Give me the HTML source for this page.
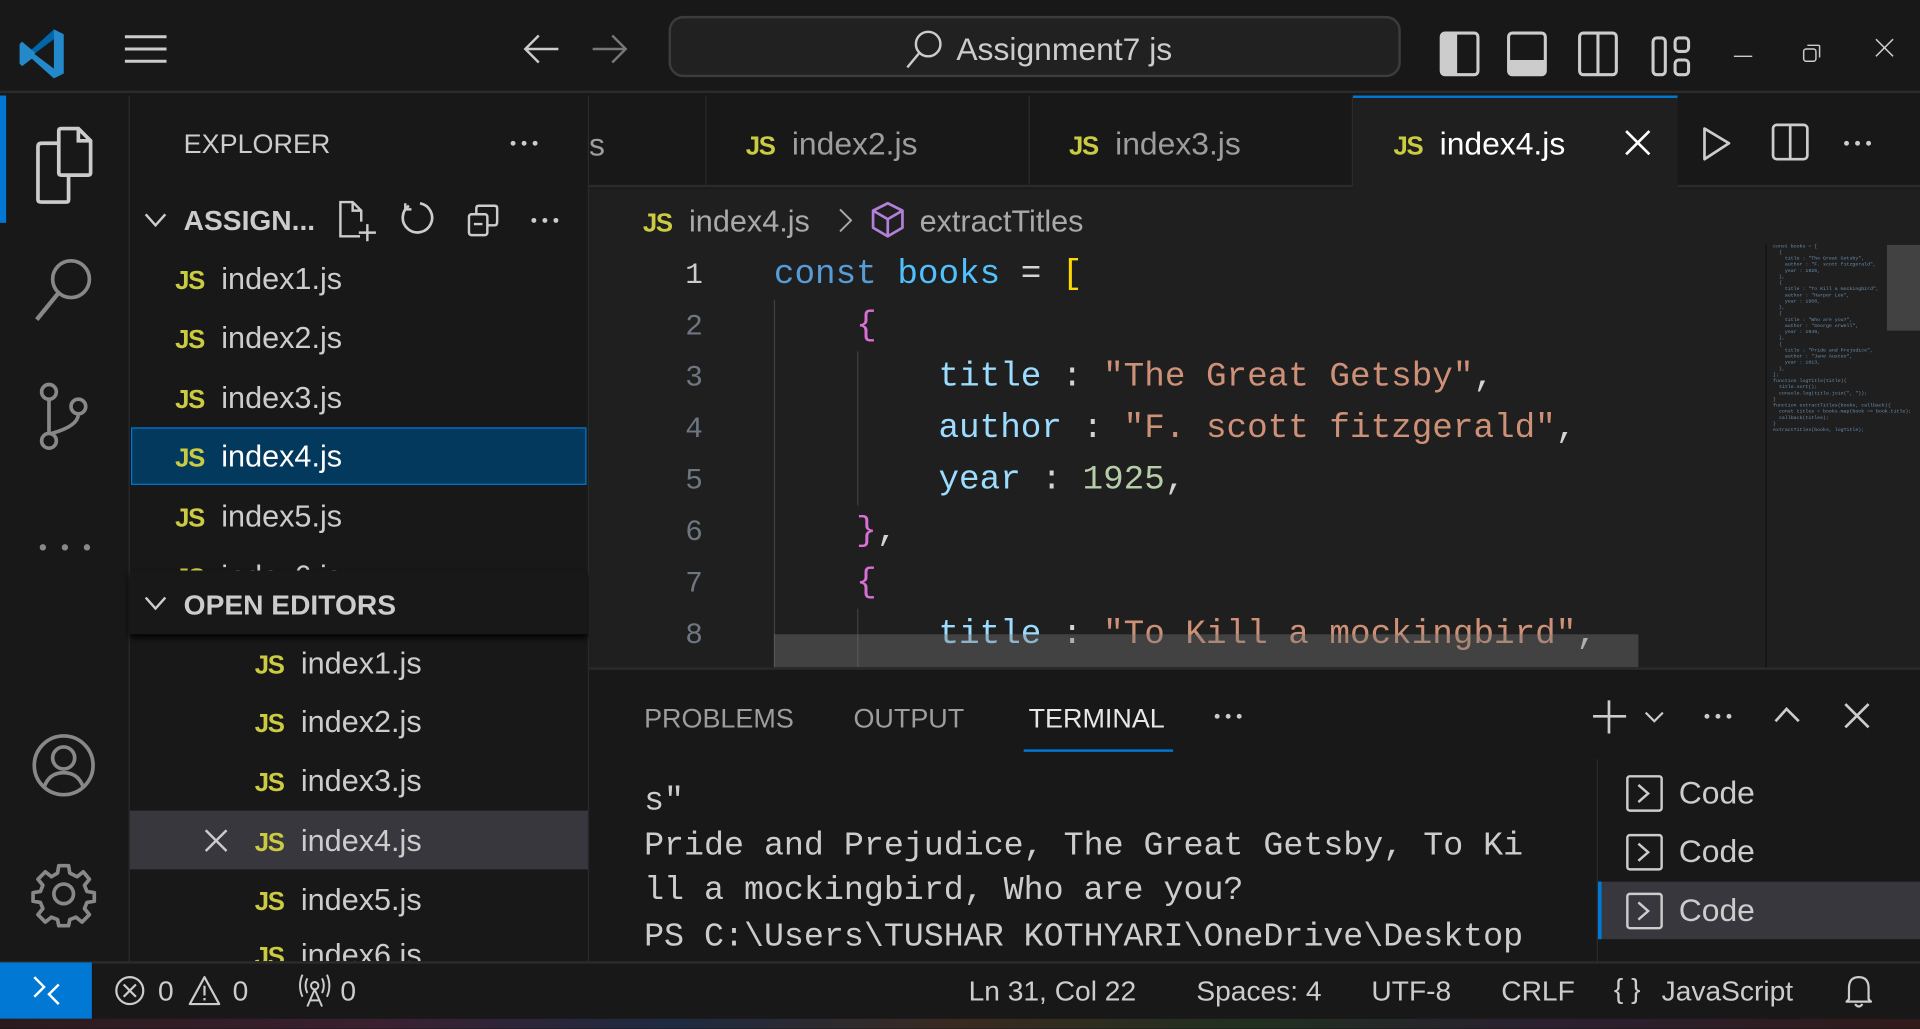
<!DOCTYPE html>
<html><head><meta charset="utf-8"><style>
*{margin:0;padding:0;box-sizing:border-box}
html,body{width:1920px;height:1029px;overflow:hidden;background:#181818}
#w{position:absolute;left:0;top:0;width:1568px;height:840px;transform:scale(1.22449);transform-origin:0 0;font-family:"Liberation Sans",sans-serif;color:#ccc;background:#181818}
.a{position:absolute}
.mono{font-family:"Liberation Mono",monospace}
.js{color:#cbcb41;font-weight:bold;font-size:21px;letter-spacing:-1px}
.f{position:absolute;font-size:25px;color:#ccc;white-space:nowrap}
.f .js{margin-right:14px}
svg{position:absolute;overflow:visible}
.ln{position:absolute;left:520px;width:54px;text-align:right;color:#6e7681;font-size:24px}
.cl{position:absolute;left:632px;font-size:28px;white-space:pre;color:#d4d4d4}
.k{color:#569cd6}.v{color:#4fc1ff}.p{color:#9cdcfe}.s{color:#ce9178}.n{color:#b5cea8}.y{color:#ffd700}.m{color:#da70d6}
.term{position:absolute;left:526px;font-size:27.2px;color:#ccc;white-space:pre}
</style></head><body><div id="w">
<!-- title bar -->
<div class="a" style="left:0;top:0;width:1568px;height:76px;background:#181818;border-bottom:2px solid #2b2b2b"></div>
<svg style="left:14px;top:22px" width="44" height="44" viewBox="0 0 44 44"><path d="M30 2 L38 6 V38 L30 42 L8 22 Z" fill="#0065a9"/><path d="M30 2 L38 6 V38 L30 42 L12 26 L4 32 L2 30 V14 L4 12 L30 34 Z" fill="#2489ca"/><path d="M30 10 V34 L14 22 Z" fill="#181818"/></svg>
<svg style="left:100px;top:27px" width="38" height="26"><path d="M2 3H36M2 13H36M2 23H36" stroke="#ccc" stroke-width="2.5"/></svg>
<svg style="left:426px;top:27px" width="32" height="26"><path d="M30 13H3M14 2L3 13L14 24" stroke="#ccc" stroke-width="2" fill="none"/></svg>
<svg style="left:482px;top:27px" width="32" height="26"><path d="M2 13H29M18 2L29 13L18 24" stroke="#777" stroke-width="2" fill="none"/></svg>
<div class="a" style="left:546px;top:13px;width:598px;height:50px;border:2px solid #3c3c3c;border-radius:12px;background:#212121"></div>
<svg style="left:738px;top:23px" width="34" height="34"><circle cx="20" cy="13" r="10" stroke="#ccc" stroke-width="2" fill="none"/><path d="M13 20L3 32" stroke="#ccc" stroke-width="2"/></svg>
<div class="a" style="left:781px;top:25px;font-size:26px;color:#ccc">Assignment7 js</div>
<svg style="left:1176px;top:26px" width="34" height="40"><rect x="1" y="1" width="30" height="34" rx="3" fill="none" stroke="#ccc" stroke-width="2.5"/><rect x="1" y="1" width="13" height="34" fill="#ccc"/></svg>
<svg style="left:1231px;top:26px" width="34" height="40"><rect x="1" y="1" width="30" height="34" rx="3" fill="none" stroke="#ccc" stroke-width="2.5"/><rect x="1" y="23" width="30" height="12" fill="#ccc"/></svg>
<svg style="left:1289px;top:26px" width="34" height="40"><rect x="1" y="1" width="30" height="34" rx="3" fill="none" stroke="#ccc" stroke-width="2.5"/><path d="M16 1V35" stroke="#ccc" stroke-width="2.5"/></svg>
<svg style="left:1349px;top:30px" width="34" height="36"><rect x="1" y="1" width="10" height="30" rx="3" fill="none" stroke="#ccc" stroke-width="2.5"/><rect x="19" y="1" width="11" height="11" rx="3" fill="none" stroke="#ccc" stroke-width="2.5"/><rect x="19" y="19" width="11" height="12" rx="3" fill="none" stroke="#ccc" stroke-width="2.5"/></svg>
<svg style="left:1416px;top:45px" width="20" height="4"><path d="M0 1H15" stroke="#ccc" stroke-width="1.2"/></svg>
<svg style="left:1472px;top:36px" width="16" height="16"><rect x="1" y="4" width="10" height="10" rx="2" fill="none" stroke="#ccc" stroke-width="1.2"/><path d="M4 1H13Q14 1 14 2V11" stroke="#ccc" stroke-width="1.2" fill="none"/></svg>
<svg style="left:1531px;top:31px" width="20" height="20"><path d="M1 1L15 15M15 1L1 15" stroke="#ccc" stroke-width="1.2"/></svg>

<!-- activity bar -->
<div class="a" style="left:0;top:78px;width:5px;height:104px;background:#0078d4"></div>
<div class="a" style="left:105px;top:78px;width:1px;height:707px;background:#2b2b2b"></div>
<svg style="left:28px;top:103px" width="50" height="60"><path d="M22 2H36L46 12V38Q46 40 44 40H22Q20 40 20 38V4Q20 2 22 2ZM36 2V12H46" stroke="#ccc" stroke-width="3" fill="none"/><path d="M20 14H6Q3 14 3 17V60Q3 62 6 62H26Q28 62 28 60V40" stroke="#ccc" stroke-width="3" fill="none"/></svg>
<svg style="left:26px;top:206px" width="54" height="60"><circle cx="32" cy="22" r="15" stroke="#888" stroke-width="3" fill="none"/><path d="M22 33L4 55" stroke="#888" stroke-width="3.5"/></svg>
<svg style="left:28px;top:310px" width="50" height="60"><circle cx="12" cy="10" r="6" stroke="#888" stroke-width="3" fill="none"/><circle cx="12" cy="50" r="6" stroke="#888" stroke-width="3" fill="none"/><circle cx="36" cy="22" r="6" stroke="#888" stroke-width="3" fill="none"/><path d="M12 16V44M36 28Q36 38 14 44" stroke="#888" stroke-width="3" fill="none"/></svg>
<svg style="left:32px;top:444px" width="44" height="8"><circle cx="3" cy="3" r="2.6" fill="#888"/><circle cx="21" cy="3" r="2.6" fill="#888"/><circle cx="39" cy="3" r="2.6" fill="#888"/></svg>
<svg style="left:26px;top:599px" width="54" height="54"><circle cx="26" cy="26" r="24" stroke="#888" stroke-width="3" fill="none"/><circle cx="26" cy="20" r="9" stroke="#888" stroke-width="3" fill="none"/><path d="M10 44Q14 32 26 32Q38 32 42 44" stroke="#888" stroke-width="3" fill="none"/></svg>
<svg style="left:26px;top:704px" width="54" height="54"><circle cx="26" cy="26" r="8" stroke="#888" stroke-width="3" fill="none"/><path d="M22 3H30L31 9L37 12L42 8L47 14L43 19L45 24L51 25V32L45 33L43 38L47 43L41 49L36 45L31 47L30 52H22L21 47L16 45L11 49L5 43L9 38L7 33L1 32V25L7 24L9 19L5 14L11 8L16 12L21 9Z" stroke="#888" stroke-width="3" fill="none" stroke-linejoin="round"/></svg>

<!-- sidebar -->
<div class="a" style="left:480px;top:78px;width:1px;height:707px;background:#2b2b2b"></div>
<div class="a" style="left:150px;top:105px;font-size:22px;color:#ccc">EXPLORER</div>
<svg style="left:416px;top:114px" width="30" height="6"><circle cx="3" cy="3" r="2" fill="#ccc"/><circle cx="12" cy="3" r="2" fill="#ccc"/><circle cx="21" cy="3" r="2" fill="#ccc"/></svg>
<svg style="left:118px;top:173px" width="20" height="14"><path d="M1 2L9 11L17 2" stroke="#ccc" stroke-width="2" fill="none"/></svg>
<div class="a" style="left:150px;top:167px;font-size:23px;font-weight:bold;color:#ccc">ASSIGN...</div>
<svg style="left:276px;top:163px" width="36" height="36"><path d="M18 30H2V2H12L19 9V18M12 2V9H19" stroke="#ccc" stroke-width="2" fill="none"/><path d="M24 20V34M17 27H31" stroke="#ccc" stroke-width="2"/></svg>
<svg style="left:327px;top:165px" width="30" height="30"><path d="M7 3A12 12 0 1 0 16 1" stroke="#ccc" stroke-width="2.2" fill="none"/><path d="M4 1V6H9" stroke="#ccc" stroke-width="2" fill="none"/></svg>
<svg style="left:382px;top:166px" width="30" height="30"><rect x="1" y="9" width="15" height="17" rx="2" stroke="#ccc" stroke-width="2" fill="none"/><path d="M7 9V4Q7 2 9 2H22Q24 2 24 4V15Q24 18 22 18H16M5 17H12" stroke="#ccc" stroke-width="2" fill="none"/></svg>
<svg style="left:433px;top:177px" width="30" height="6"><circle cx="3" cy="3" r="2" fill="#ccc"/><circle cx="12" cy="3" r="2" fill="#ccc"/><circle cx="21" cy="3" r="2" fill="#ccc"/></svg>
<div class="a" style="left:107px;top:349px;width:372px;height:47px;background:#04395e;border:1px solid #0078d4"></div>
<div class="f" style="left:143px;top:214px"><span class="js">JS</span>index1.js</div>
<div class="f" style="left:143px;top:262px"><span class="js">JS</span>index2.js</div>
<div class="f" style="left:143px;top:311px"><span class="js">JS</span>index3.js</div>
<div class="f" style="left:143px;top:359px;color:#fff"><span class="js">JS</span>index4.js</div>
<div class="f" style="left:143px;top:408px"><span class="js">JS</span>index5.js</div>
<div class="a" style="left:106px;top:455px;width:374px;height:11px;overflow:hidden"><div class="f" style="left:37px;top:2px"><span class="js">JS</span>index6.js</div></div>
<div class="a" style="left:106px;top:466px;width:374px;height:52px;background:#181818;box-shadow:0 3px 5px #000"></div>
<svg style="left:118px;top:486px" width="20" height="14"><path d="M1 2L9 11L17 2" stroke="#ccc" stroke-width="2" fill="none"/></svg>
<div class="a" style="left:150px;top:481px;font-size:23px;font-weight:bold;color:#ccc">OPEN EDITORS</div>
<div class="a" style="left:106px;top:662px;width:374px;height:48px;background:#37373d"></div>
<div class="f" style="left:208px;top:528px"><span class="js">JS</span>index1.js</div>
<div class="f" style="left:208px;top:576px"><span class="js">JS</span>index2.js</div>
<div class="f" style="left:208px;top:624px"><span class="js">JS</span>index3.js</div>
<svg style="left:167px;top:677px" width="20" height="20"><path d="M1 1L18 18M18 1L1 18" stroke="#ccc" stroke-width="2"/></svg>
<div class="f" style="left:208px;top:673px"><span class="js">JS</span>index4.js</div>
<div class="f" style="left:208px;top:721px"><span class="js">JS</span>index5.js</div>
<div class="a" style="left:106px;top:768px;width:374px;height:17px;overflow:hidden"><div class="f" style="left:102px;top:-2px"><span class="js">JS</span>index6.js</div></div>

<!-- tabs -->
<div class="a" style="left:481px;top:78px;width:1087px;height:75px;background:#181818;border-bottom:2px solid #2b2b2b"></div>
<div class="a" style="left:576px;top:78px;width:1px;height:75px;background:#2b2b2b"></div>
<div class="a" style="left:840px;top:78px;width:1px;height:75px;background:#2b2b2b"></div>
<div class="a" style="left:1104px;top:78px;width:1px;height:75px;background:#2b2b2b"></div>
<div class="a" style="left:481px;top:103px;font-size:26px;color:#9d9d9d">s</div>
<div class="f" style="left:609px;top:102px;font-size:26px;color:#9d9d9d"><span class="js">JS</span>index2.js</div>
<div class="f" style="left:873px;top:102px;font-size:26px;color:#9d9d9d"><span class="js">JS</span>index3.js</div>
<div class="a" style="left:1105px;top:78px;width:265px;height:76px;background:#1f1f1f;border-top:2px solid #0078d4"></div>
<div class="f" style="left:1138px;top:102px;font-size:26px;color:#fff"><span class="js">JS</span>index4.js</div>
<svg style="left:1327px;top:106px" width="22" height="22"><path d="M1 1L20 20M20 1L1 20" stroke="#fff" stroke-width="2.2"/></svg>
<svg style="left:1390px;top:103px" width="26" height="30"><path d="M2 2L22 14L2 27Z" stroke="#ccc" stroke-width="2.2" fill="none" stroke-linejoin="round"/></svg>
<svg style="left:1447px;top:101px" width="32" height="32"><rect x="1" y="1" width="28" height="28" rx="3" stroke="#ccc" stroke-width="2.2" fill="none"/><path d="M15 1V29" stroke="#ccc" stroke-width="2.2"/></svg>
<svg style="left:1505px;top:114px" width="30" height="6"><circle cx="3" cy="3" r="2" fill="#ccc"/><circle cx="12" cy="3" r="2" fill="#ccc"/><circle cx="21" cy="3" r="2" fill="#ccc"/></svg>

<!-- editor -->
<div class="a" style="left:481px;top:154px;width:1087px;height:391px;background:#1f1f1f"></div>
<div class="f" style="left:525px;top:167px;font-size:25px;color:#a9a9a9"><span class="js">JS</span>index4.js</div>
<svg style="left:684px;top:169px" width="14" height="22"><path d="M2 2L11 11L2 20" stroke="#a9a9a9" stroke-width="1.6" fill="none"/></svg>
<svg style="left:711px;top:164px" width="30" height="32"><path d="M14 2L26 8V22L14 29L2 22V8Z M2 8L14 15L26 8M14 15V29" stroke="#b180d7" stroke-width="2.2" fill="none" stroke-linejoin="round"/></svg>
<div class="a" style="left:751px;top:167px;font-size:25px;color:#a9a9a9">extractTitles</div>
<div class="ln mono" style="top:212px;color:#ccc">1</div>
<div class="ln mono" style="top:254px">2</div>
<div class="ln mono" style="top:296px">3</div>
<div class="ln mono" style="top:338px">4</div>
<div class="ln mono" style="top:380px">5</div>
<div class="ln mono" style="top:422px">6</div>
<div class="ln mono" style="top:464px">7</div>
<div class="ln mono" style="top:506px">8</div>
<div class="a" style="left:632px;top:245px;width:1px;height:300px;background:#404040"></div>
<div class="a" style="left:700px;top:287px;width:1px;height:126px;background:#404040"></div>
<div class="a" style="left:700px;top:497px;width:1px;height:48px;background:#404040"></div>
<div class="cl mono" style="top:209px"><span class="k">const</span> <span class="v">books</span> = <span class="y">[</span></div>
<div class="cl mono" style="top:251px">    <span class="m">{</span></div>
<div class="cl mono" style="top:293px">        <span class="p">title</span> : <span class="s">"The Great Getsby"</span>,</div>
<div class="cl mono" style="top:335px">        <span class="p">author</span> : <span class="s">"F. scott fitzgerald"</span>,</div>
<div class="cl mono" style="top:377px">        <span class="p">year</span> : <span class="n">1925</span>,</div>
<div class="cl mono" style="top:419px">    <span class="m">}</span>,</div>
<div class="cl mono" style="top:461px">    <span class="m">{</span></div>
<div class="cl mono" style="top:503px">        <span class="p">title</span> : <span class="s">"To Kill a mockingbird"</span>,</div>
<div class="a" style="left:632px;top:518px;width:706px;height:27px;background:rgba(121,121,121,0.4)"></div>
<!-- minimap -->
<div class="a" style="left:1442px;top:200px;width:1px;height:345px;background:#111"></div>
<div class="a" style="left:1541px;top:200px;width:27px;height:70px;background:#424242"></div>
<div class="a mono" style="left:1448px;top:200px;font-size:4px;line-height:5px;color:#6a8fb0;white-space:pre">const books = [
  {
    title : "The Great Getsby",
    author : "F. scott fitzgerald",
    year : 1925,
  },
  {
    title : "To Kill a mockingbird",
    author : "Harper Lee",
    year : 1960,
  },
  {
    title : "Who are you?",
    author : "George orwell",
    year : 1949,
  },
  {
    title : "Pride and Prejudice",
    author : "Jane Austen",
    year : 1813,
  },
];
function logTitle(title){
  title.sort();
  console.log(title.join(", "));
}
function extractTitles(books, callback){
  const titles = books.map(book => book.title);
  callback(titles);
}
extractTitles(books, logTitle);</div>

<!-- panel -->
<div class="a" style="left:481px;top:545px;width:1087px;height:240px;background:#181818;border-top:2px solid #2b2b2b"></div>
<div class="a" style="left:526px;top:574px;font-size:22px;color:#9d9d9d">PROBLEMS</div>
<div class="a" style="left:697px;top:574px;font-size:22px;color:#9d9d9d">OUTPUT</div>
<div class="a" style="left:840px;top:574px;font-size:22px;color:#e7e7e7">TERMINAL</div>
<div class="a" style="left:836px;top:612px;width:122px;height:2px;background:#0078d4"></div>
<svg style="left:991px;top:582px" width="30" height="6"><circle cx="3" cy="3" r="2" fill="#ccc"/><circle cx="12" cy="3" r="2" fill="#ccc"/><circle cx="21" cy="3" r="2" fill="#ccc"/></svg>
<svg style="left:1300px;top:572px" width="30" height="28"><path d="M14 0V27M1 13H28" stroke="#ccc" stroke-width="2.2"/></svg>
<svg style="left:1343px;top:580px" width="18" height="12"><path d="M1 2L8 9L15 2" stroke="#ccc" stroke-width="1.8" fill="none"/></svg>
<svg style="left:1391px;top:582px" width="30" height="6"><circle cx="3" cy="3" r="2" fill="#ccc"/><circle cx="12" cy="3" r="2" fill="#ccc"/><circle cx="21" cy="3" r="2" fill="#ccc"/></svg>
<svg style="left:1448px;top:574px" width="24" height="20"><path d="M2 15L11 5L21 15" stroke="#ccc" stroke-width="2.2" fill="none"/></svg>
<svg style="left:1506px;top:574px" width="22" height="22"><path d="M1 1L20 20M20 1L1 20" stroke="#ccc" stroke-width="2.2"/></svg>
<div class="term mono" style="top:639px">s"</div>
<div class="term mono" style="top:676px">Pride and Prejudice, The Great Getsby, To Ki</div>
<div class="term mono" style="top:712px">ll a mockingbird, Who are you?</div>
<div class="term mono" style="top:750px">PS C:\Users\TUSHAR KOTHYARI\OneDrive\Desktop</div>
<div class="a" style="left:1304px;top:620px;width:1px;height:165px;background:#2b2b2b"></div>
<div class="a" style="left:1305px;top:720px;width:263px;height:47px;background:#37373d;border-left:3px solid #0078d4"></div>
<svg style="left:1328px;top:633px" width="32" height="32"><rect x="1" y="1" width="28" height="28" rx="2" stroke="#ccc" stroke-width="2" fill="none"/><path d="M10 8L18 15L10 22" stroke="#ccc" stroke-width="2" fill="none"/></svg>
<svg style="left:1328px;top:681px" width="32" height="32"><rect x="1" y="1" width="28" height="28" rx="2" stroke="#ccc" stroke-width="2" fill="none"/><path d="M10 8L18 15L10 22" stroke="#ccc" stroke-width="2" fill="none"/></svg>
<svg style="left:1328px;top:729px" width="32" height="32"><rect x="1" y="1" width="28" height="28" rx="2" stroke="#ccc" stroke-width="2" fill="none"/><path d="M10 8L18 15L10 22" stroke="#ccc" stroke-width="2" fill="none"/></svg>
<div class="a" style="left:1371px;top:632px;font-size:26px;color:#ccc">Code</div>
<div class="a" style="left:1371px;top:680px;font-size:26px;color:#ccc">Code</div>
<div class="a" style="left:1371px;top:728px;font-size:26px;color:#ccc">Code</div>

<!-- status bar -->
<div class="a" style="left:0;top:785px;width:1568px;height:47px;background:#181818;border-top:2px solid #2b2b2b"></div>
<div class="a" style="left:0;top:786px;width:75px;height:46px;background:#0078d4"></div>
<svg style="left:25px;top:795px" width="26" height="28"><path d="M3 3L11 11L3 19M23 9L15 17L23 25" stroke="#fff" stroke-width="2" fill="none"/></svg>
<svg style="left:94px;top:797px" width="26" height="26"><circle cx="12" cy="12" r="11" stroke="#ccc" stroke-width="1.8" fill="none"/><path d="M7 7L17 17M17 7L7 17" stroke="#ccc" stroke-width="1.8"/></svg>
<div class="a" style="left:129px;top:796px;font-size:23px;color:#ccc">0</div>
<svg style="left:154px;top:796px" width="28" height="26"><path d="M13 2L25 24H1Z" stroke="#ccc" stroke-width="1.8" fill="none" stroke-linejoin="round"/><path d="M13 9V17M13 19V21" stroke="#ccc" stroke-width="1.8"/></svg>
<div class="a" style="left:190px;top:796px;font-size:23px;color:#ccc">0</div>
<svg style="left:243px;top:795px" width="30" height="28"><circle cx="14" cy="10" r="3" stroke="#ccc" stroke-width="1.6" fill="none"/><path d="M8 4Q5 10 8 16M20 4Q23 10 20 16M4 1Q0 10 4 19M24 1Q28 10 24 19M14 13L8 27M14 13L20 27M10 22H18" stroke="#ccc" stroke-width="1.6" fill="none"/></svg>
<div class="a" style="left:278px;top:796px;font-size:23px;color:#ccc">0</div>
<div class="a" style="left:791px;top:796px;font-size:23px;color:#ccc;white-space:nowrap">Ln 31, Col 22</div>
<div class="a" style="left:977px;top:796px;font-size:23px;color:#ccc">Spaces: 4</div>
<div class="a" style="left:1120px;top:796px;font-size:23px;color:#ccc">UTF-8</div>
<div class="a" style="left:1226px;top:796px;font-size:23px;color:#ccc">CRLF</div>
<div class="a" style="left:1318px;top:794px;font-size:23px;color:#ccc">{ }</div>
<div class="a" style="left:1357px;top:796px;font-size:23px;color:#ccc">JavaScript</div>
<svg style="left:1506px;top:795px" width="26" height="30"><path d="M4 21V12Q4 3 12 3Q20 3 20 12V21L22 23H2Z M9 25Q12 29 15 25" stroke="#ccc" stroke-width="1.8" fill="none" stroke-linejoin="round"/></svg>
<div class="a" style="left:0;top:832px;width:1568px;height:8px;background:linear-gradient(90deg,#2a1a1e,#3a2030 20%,#1e2a40 35%,#3a2a20 50%,#203020 65%,#2a2030 80%,#301a1a)"></div>
</div></body></html>
